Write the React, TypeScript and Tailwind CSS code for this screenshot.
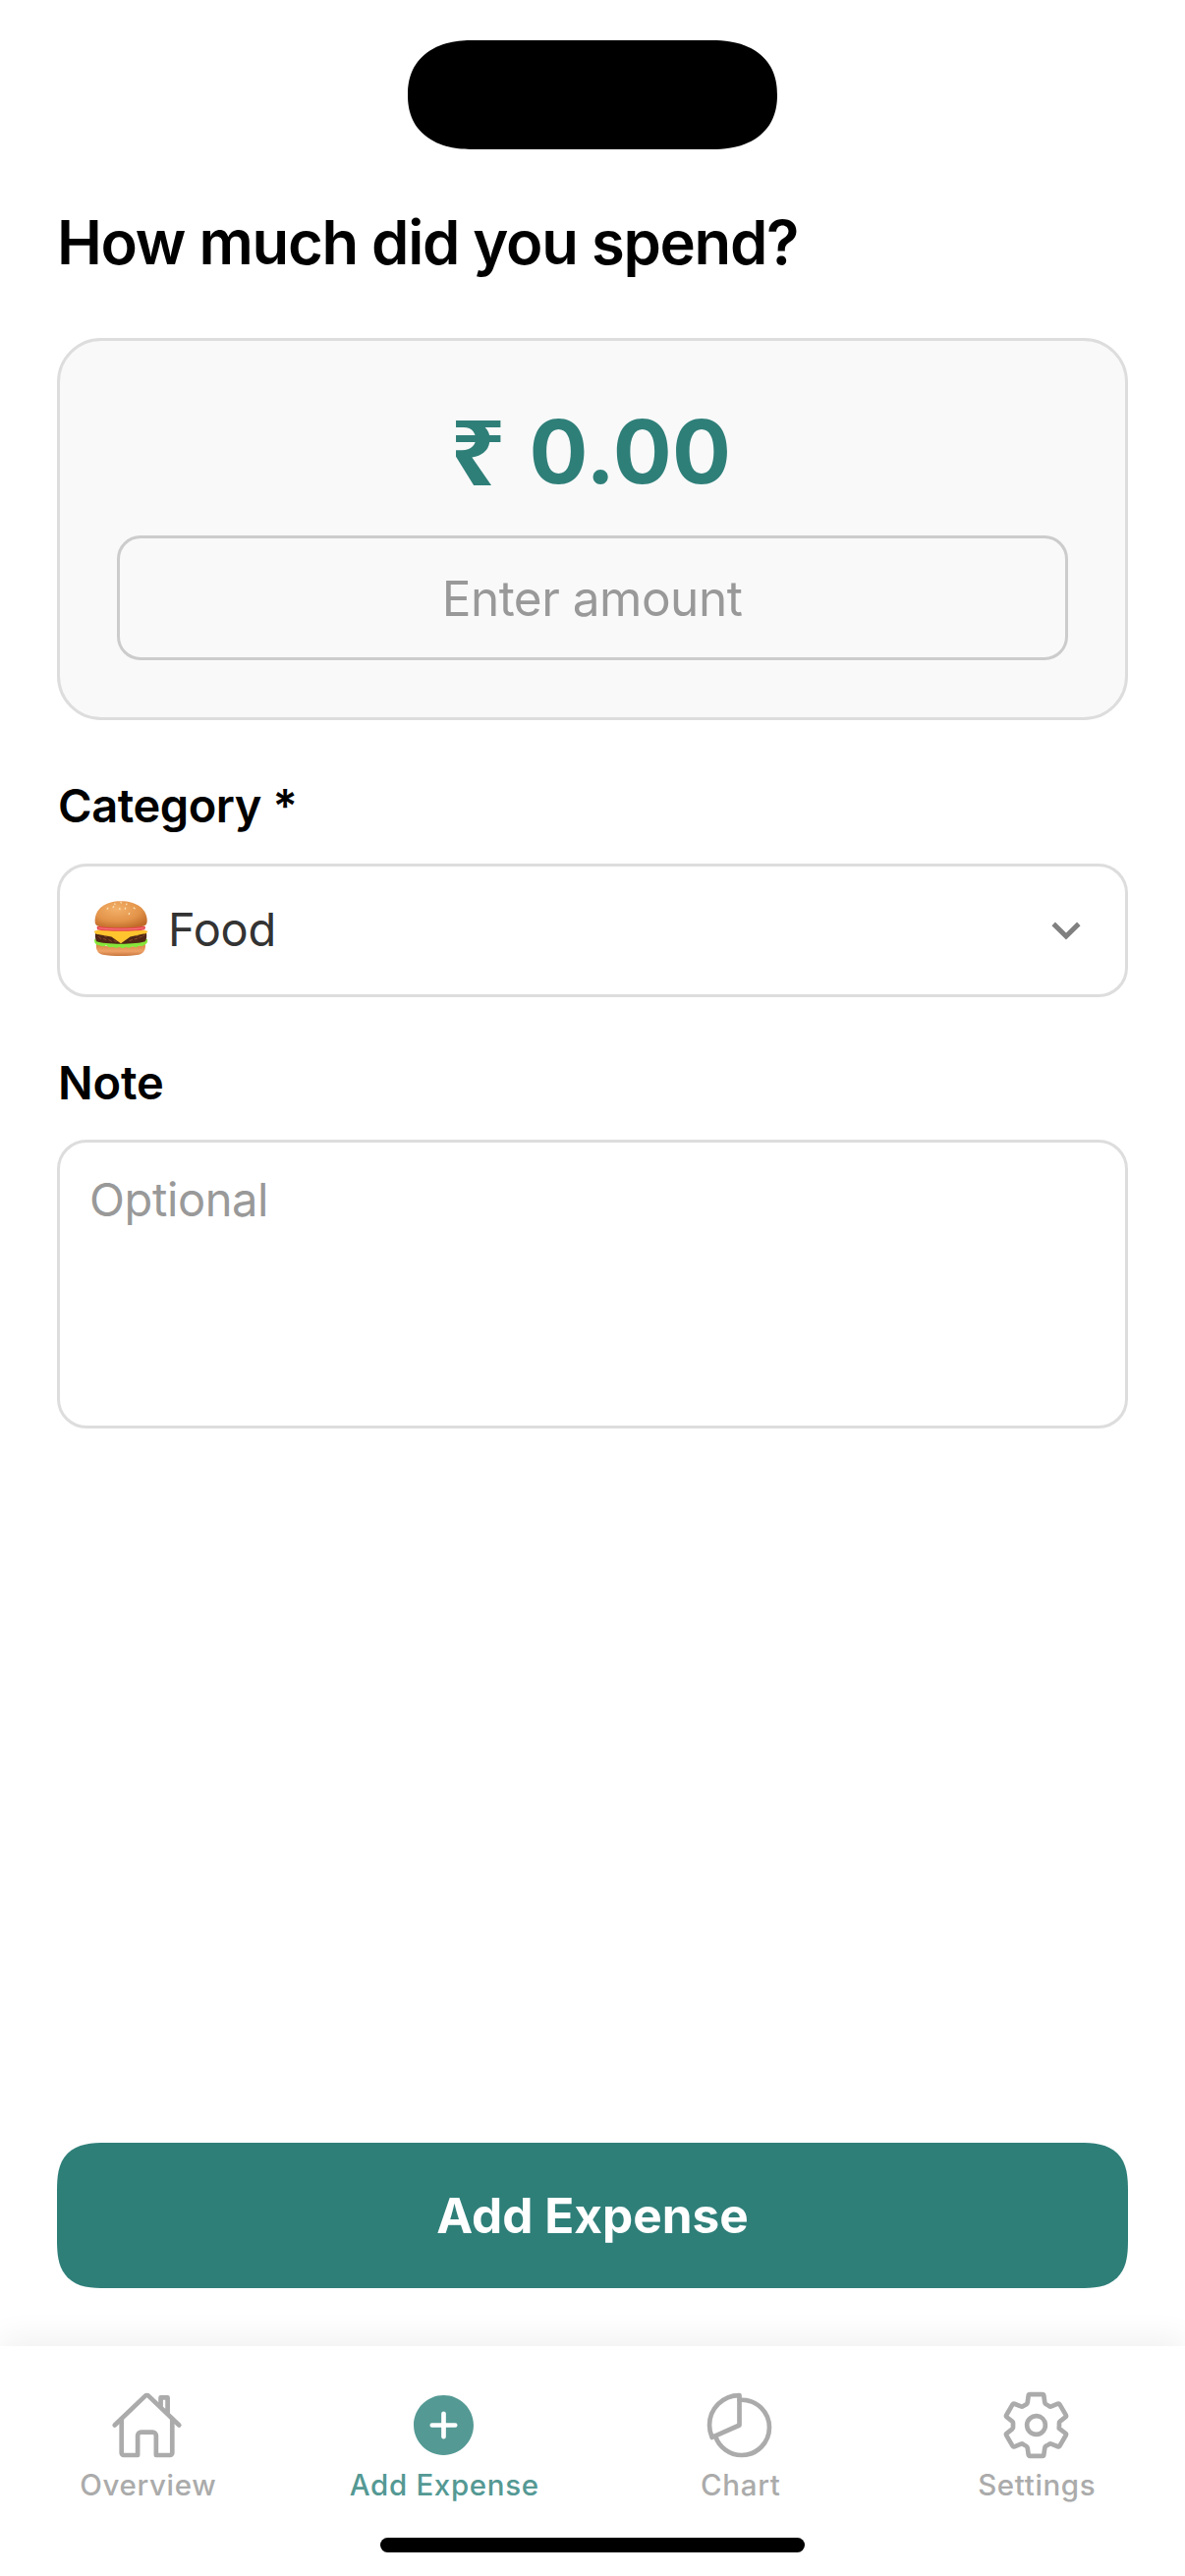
import type { ReactNode } from "react";
import {
  IoAddCircle,
  IoHomeOutline,
  IoPieChartOutline,
  IoSettingsOutline,
} from "react-icons/io5";

function Burger() {
  return (
    <svg viewBox="29 35 168 170" className="mb-[4px] h-[56px] w-[56px]" role="img" aria-label="Burger">
      <defs>
        <radialGradient id="bun" cx="0.42" cy="0.3" r="0.75">
          <stop offset="0" stopColor="#f3b069" />
          <stop offset="0.6" stopColor="#e3944a" />
          <stop offset="1" stopColor="#c06a28" />
        </radialGradient>
        <linearGradient id="base" x1="0" y1="0" x2="0" y2="1">
          <stop offset="0" stopColor="#d8853f" />
          <stop offset="0.6" stopColor="#eea267" />
          <stop offset="1" stopColor="#c9763c" />
        </linearGradient>
      </defs>
      <path d="M37 168 C60 180 165 180 188 168 C191 185 184 198 168 201 C140 206 84 206 57 201 C41 198 35 185 37 168Z" fill="url(#base)" />
      <path d="M31 153 C34 162 184 162 195 153 C197 163 193 169 185 171 C181 176 174 176 169 172 C163 179 155 180 149 175 C143 181 134 182 129 177 C123 182 115 182 109 177 C102 181 94 181 88 177 C80 180 72 177 68 172 C60 177 52 176 48 172 C39 173 30 167 31 153Z" fill="#86e63a" />
      <path d="M35 130 C60 122 165 122 191 130 C194 143 193 155 188 160 C165 170 60 170 38 160 C33 154 33 141 35 130Z" fill="#4f2615" />
      <path d="M45 146l6 5M60 152l7 3M76 155l8 5M92 158l7 3M140 158l8-3M156 153l8-2M170 148l8-3M182 143l4-2M62 143l6 3M160 144l6-2" stroke="#8a4a2a" strokeWidth="3" strokeLinecap="round" />
      <path d="M31 128 C50 118 175 118 196 128 C195 134 190 136 183 137 L142 146 L113 166 L84 146 L42 138 C35 137 31 134 31 128Z" fill="#ffc42e" />
      <path d="M39 115 C60 108 165 108 189 115 L187 124 C165 130 62 130 40 124Z" fill="#e8464c" />
      <path d="M44 119 C80 124 145 124 184 119" stroke="#f98b8b" strokeWidth="2.5" fill="none" />
      <path d="M33 97 C33 60 64 36 113 36 C162 36 194 60 194 97 C194 108 188 112 178 114 C145 119 81 119 48 114 C38 112 33 108 33 97Z" fill="url(#bun)" />
      <g stroke="#f9dfb2" strokeWidth="4" strokeLinecap="round">
        <path d="M94 44l1 1M113 39l1 2M131 44l-1 2M73 57l-2 3M91 52l-2 3M109 58l1 3M127 57l-1 3M153 56l3 3M139 73l-1 3" />
      </g>
    </svg>
  );
}

function ChevronDown() {
  return (
    <svg viewBox="0 0 30 19" className="h-[19px] w-[30px]" fill="none" stroke="#808080" strokeWidth="5" strokeLinejoin="miter">
      <path d="M2.2 2.4 15 15 27.8 2.4" />
    </svg>
  );
}

function Tab({ icon, label, active = false }: { icon: ReactNode; label: string; active?: boolean }) {
  return (
    <button
      className={`flex flex-1 flex-col items-center text-[29.5px] leading-[38px] font-medium tracking-[0.65px] ${
        active ? "text-[#549994]" : "text-[#ababab]"
      }`}
    >
      <span className="mr-[2px] mb-[4px] text-[75px]">{icon}</span>
      {label}
    </button>
  );
}

export default function App() {
  return (
    <div className="flex h-[2622px] w-[1206px] flex-col overflow-hidden bg-white font-['Inter',sans-serif] text-black">
      <header className="flex h-[207px] justify-center pt-[41px]">
        <div className="h-[111px] w-[376px] rounded-[66px_/_55.5px] bg-black [corner-shape:superellipse(1.2)]" />
      </header>

      <main className="flex flex-1 flex-col px-[58px] pb-[59px]">
        <h1 className="h-[80px] text-[61.5px] leading-[80px] font-semibold tracking-[-1.27px]">
          How much did you spend?
        </h1>

        <section className="mt-[57px] flex h-[389px] flex-col rounded-[45px] border-3 border-[#ddd] bg-[#f9f9f9] px-[58px] pt-[63px]">
          <div className="flex h-[100px] justify-center gap-[26px] text-[89px] leading-[100px] font-bold text-[#2f7f79]">
            <span className="origin-[100%_82%] translate-x-[3px] scale-x-113 scale-y-102 font-['Noto_Sans']">₹</span>
            <span className="tracking-[0.4px]">0.00</span>
          </div>
          <div className="mt-[35px] h-[127px] rounded-[24px] border-3 border-[#ccc] pr-[1px] text-center text-[49.5px] leading-[122px] tracking-[-0.5px] text-[#999]">
            Enter amount
          </div>
        </section>

        <label className="mt-[57px] ml-[1px] h-[60px] text-[47px] leading-[60px] font-semibold tracking-[-0.45px]">
          Category *
        </label>
        <div className="mt-[29px] flex h-[136px] items-center rounded-[30px] border-3 border-[#ddd] pr-[45px] pl-[34px]">
          <Burger />
          <span className="mb-[2px] ml-[20px] text-[47px] leading-[60px] tracking-[-0.25px] text-[#333]">Food</span>
          <span className="ml-auto">
            <ChevronDown />
          </span>
        </div>

        <label className="mt-[57px] ml-[1px] h-[60px] text-[47px] leading-[60px] font-semibold tracking-[-0.15px]">
          Note
        </label>
        <div className="mt-[28px] h-[294px] rounded-[30px] border-3 border-[#ddd] px-[30px] pt-[28px] text-[47px] leading-[60px] tracking-[-0.4px] text-[#999]">
          Optional
        </div>

        <button className="mt-auto h-[148px] rounded-[50px] bg-[#2f7f79] text-[49.5px] leading-[148px] font-bold text-white [corner-shape:superellipse(1.5)]">
          Add Expense
        </button>
      </main>

      <nav className="flex h-[234px] flex-col items-center bg-white shadow-[0_-9px_30px_rgba(0,0,0,0.06)]">
        <div className="flex w-full pt-[43px]">
          <Tab icon={<IoHomeOutline />} label="Overview" />
          <Tab icon={<IoAddCircle />} label="Add Expense" active />
          <Tab icon={<IoPieChartOutline />} label="Chart" />
          <Tab icon={<IoSettingsOutline />} label="Settings" />
        </div>
        <div className="mt-auto mb-[24px] h-[15px] w-[432px] rounded-full bg-black" />
      </nav>
    </div>
  );
}
